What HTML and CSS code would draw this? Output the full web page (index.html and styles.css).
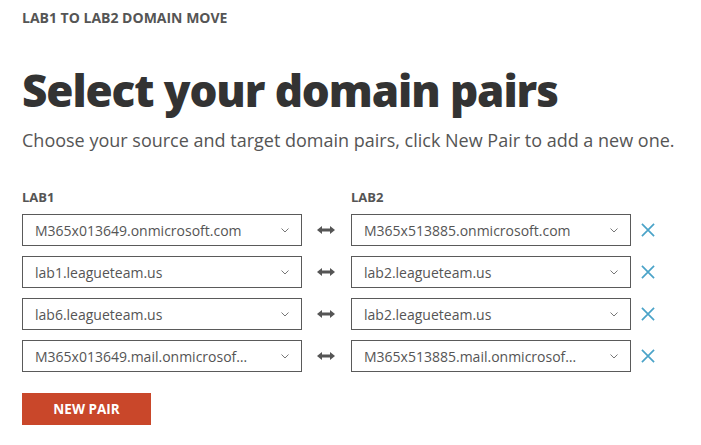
FILE: index.html
```html
<!DOCTYPE html>
<html lang="en">
<head>
    <meta charset="UTF-8">
    <title>Domain Move</title>
    <link rel="stylesheet" href="styles.css">
</head>
<body>
    <div class="page">
        <div class="crumb">LAB1 TO LAB2 DOMAIN MOVE</div>
        <h1 class="title">Select your domain pairs</h1>
        <p class="subtitle">Choose your source and target domain pairs, click New Pair to add a new one.</p>

        <div class="pairs">
            <div class="pair labels">
                <div class="label">LAB1</div>
                <div class="swap"></div>
                <div class="label">LAB2</div>
            </div>

            <div class="pair">
                <div class="select"><span class="value">M365x013649.onmicrosoft.com</span><svg class="chev" viewBox="0 0 8 5"><path d="M0.5 0.5 L4 4 L7.5 0.5" /></svg></div>
                <svg class="swap" viewBox="0 0 18 8"><path d="M0 4 L5 0 L5 2.5 L13 2.5 L13 0 L18 4 L13 8 L13 5.5 L5 5.5 L5 8 Z" /></svg>
                <div class="select"><span class="value">M365x513885.onmicrosoft.com</span><svg class="chev" viewBox="0 0 8 5"><path d="M0.5 0.5 L4 4 L7.5 0.5" /></svg></div>
                <svg class="remove" viewBox="0 0 15 15"><path d="M1 1 L14 14 M14 1 L1 14" /></svg>
            </div>

            <div class="pair">
                <div class="select"><span class="value">lab1.leagueteam.us</span><svg class="chev" viewBox="0 0 8 5"><path d="M0.5 0.5 L4 4 L7.5 0.5" /></svg></div>
                <svg class="swap" viewBox="0 0 18 8"><path d="M0 4 L5 0 L5 2.5 L13 2.5 L13 0 L18 4 L13 8 L13 5.5 L5 5.5 L5 8 Z" /></svg>
                <div class="select"><span class="value">lab2.leagueteam.us</span><svg class="chev" viewBox="0 0 8 5"><path d="M0.5 0.5 L4 4 L7.5 0.5" /></svg></div>
                <svg class="remove" viewBox="0 0 15 15"><path d="M1 1 L14 14 M14 1 L1 14" /></svg>
            </div>

            <div class="pair">
                <div class="select"><span class="value">lab6.leagueteam.us</span><svg class="chev" viewBox="0 0 8 5"><path d="M0.5 0.5 L4 4 L7.5 0.5" /></svg></div>
                <svg class="swap" viewBox="0 0 18 8"><path d="M0 4 L5 0 L5 2.5 L13 2.5 L13 0 L18 4 L13 8 L13 5.5 L5 5.5 L5 8 Z" /></svg>
                <div class="select"><span class="value">lab2.leagueteam.us</span><svg class="chev" viewBox="0 0 8 5"><path d="M0.5 0.5 L4 4 L7.5 0.5" /></svg></div>
                <svg class="remove" viewBox="0 0 15 15"><path d="M1 1 L14 14 M14 1 L1 14" /></svg>
            </div>

            <div class="pair">
                <div class="select"><span class="value">M365x013649.mail.onmicrosoft.com</span><svg class="chev" viewBox="0 0 8 5"><path d="M0.5 0.5 L4 4 L7.5 0.5" /></svg></div>
                <svg class="swap" viewBox="0 0 18 8"><path d="M0 4 L5 0 L5 2.5 L13 2.5 L13 0 L18 4 L13 8 L13 5.5 L5 5.5 L5 8 Z" /></svg>
                <div class="select"><span class="value">M365x513885.mail.onmicrosoft.com</span><svg class="chev" viewBox="0 0 8 5"><path d="M0.5 0.5 L4 4 L7.5 0.5" /></svg></div>
                <svg class="remove" viewBox="0 0 15 15"><path d="M1 1 L14 14 M14 1 L1 14" /></svg>
            </div>
        </div>

        <button class="new-pair">NEW PAIR</button>
    </div>
</body>
</html>
```

FILE: styles.css
```css
html, body {
    margin: 0;
    background: #ffffff;
    font-family: "Open Sans", Arial, sans-serif;
    color: #333333;
}

.page {
    padding: 8px 22px;
}

.crumb {
    font-size: 14px;
    font-weight: 700;
    color: #555555;
    line-height: 19px;
}

.title {
    margin: 37px 0 0 0;
    font-size: 44px;
    font-weight: 800;
    line-height: 52px;
    letter-spacing: -1.1px;
    color: #333333;
}

.subtitle {
    margin: 12px 0 0 0;
    font-size: 18px;
    line-height: 24px;
    color: #555555;
}

.pairs {
    margin-top: 37px;
    display: flex;
    flex-direction: column;
    gap: 10px;
}

.pair {
    display: flex;
    align-items: center;
}

.pair.labels {
    margin-bottom: -2px;
}

.label {
    width: 280px;
    font-size: 13px;
    font-weight: 700;
    color: #555555;
    line-height: 17px;
}

.select {
    box-sizing: border-box;
    width: 280px;
    height: 32px;
    border: 1px solid #5a5a5a;
    display: flex;
    align-items: center;
    padding: 0 12px 0 12px;
    font-size: 14px;
    color: #555555;
}

.value {
    flex: 1;
    overflow: hidden;
    white-space: nowrap;
    text-overflow: ellipsis;
    margin-right: 30px;
}

.chev {
    width: 8px;
    height: 5px;
    fill: none;
    stroke: #777777;
    stroke-width: 1;
}

.swap {
    width: 18px;
    height: 8px;
    margin: 0 16px 0 15px;
    fill: #555555;
}

.remove {
    width: 14px;
    height: 14px;
    margin-left: 10px;
    fill: none;
    stroke: #4aa3c8;
    stroke-width: 1.8;
}

.new-pair {
    margin-top: 21px;
    width: 129px;
    height: 32px;
    border: none;
    background: #c9472a;
    color: #ffffff;
    font-family: "Open Sans", Arial, sans-serif;
    font-size: 13.5px;
    font-weight: 700;
    cursor: pointer;
}
```
